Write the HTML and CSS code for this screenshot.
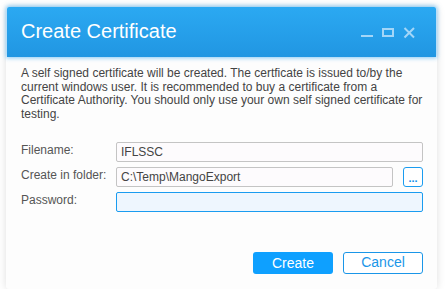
FILE: index.html
```html
<!DOCTYPE html>
<html lang="en">
<head>
    <meta charset="UTF-8">
    <title>Create Certificate</title>
    <link rel="stylesheet" href="styles.css">
</head>
<body>

<div class="dialog">
    <div class="dialog-header">
        <span class="dialog-title">Create Certificate</span>
        <div class="window-buttons">
            <svg width="13" height="12" viewBox="0 0 13 12"><rect x="0" y="8" width="12" height="2" fill="currentColor"/></svg>
            <svg width="13" height="12" viewBox="0 0 13 12"><rect x="1" y="2" width="10" height="7" fill="none" stroke="currentColor" stroke-width="2"/></svg>
            <svg width="13" height="12" viewBox="0 0 13 12"><path d="M1.5 1 L11 10.5 M11 1 L1.5 10.5" stroke="currentColor" stroke-width="2"/></svg>
        </div>
    </div>

    <div class="dialog-body">
        <p class="intro">A self signed certificate will be created. The certficate is issued to/by the current windows user. It is recommended to buy a certificate from a Certificate Authority. You should only use your own self signed certificate for testing.</p>

        <div class="form">
            <label for="filename">Filename:</label>
            <input type="text" id="filename" class="field" value="IFLSSC">

            <label for="folder">Create in folder:</label>
            <div class="folder-row">
                <input type="text" id="folder" class="field" value="C:\Temp\MangoExport">
                <button class="browse-button">...</button>
            </div>

            <label for="password">Password:</label>
            <input type="password" id="password" class="field field-focus">
        </div>

        <div class="actions">
            <button class="btn btn-primary">Create</button>
            <button class="btn btn-outline">Cancel</button>
        </div>
    </div>
</div>

</body>
</html>
```

FILE: styles.css
```css
body {
    margin: 0;
    background: #fff;
    font-family: 'Liberation Sans', Arial, sans-serif;
    padding: 7px 0 0 6px;
}

.dialog {
    width: 431px;
    background: #fdfdfd;
    border-radius: 3px;
    box-shadow: 0 0 8px rgba(0, 0, 0, 0.13);
}

.dialog-header {
    height: 50px;
    margin: 0 1px;
    padding: 0 14px;
    display: flex;
    align-items: center;
    justify-content: space-between;
    background: linear-gradient(#2ba9f2, #2196e2);
    box-shadow: 0 0 4px 1px rgba(40, 160, 240, 0.55);
    border-radius: 2px 2px 0 0;
}

.dialog-title {
    color: #fff;
    font-size: 20px;
    margin-top: -2px;
}

.window-buttons {
    display: flex;
    gap: 8px;
    color: #a3d6f8;
    margin-right: 6px;
    margin-top: 2px;
}

.dialog-body {
    padding: 10px 14px 15px 15px;
}

.intro {
    margin: 0;
    font-size: 12px;
    line-height: 13.5px;
    color: #444;
}

.form {
    display: grid;
    grid-template-columns: 95px 1fr;
    row-gap: 5px;
    margin-top: 21px;
}

.form label {
    font-size: 12px;
    color: #555;
    padding-top: 1px;
}

.field {
    box-sizing: border-box;
    width: 100%;
    height: 20px;
    padding: 0 4px;
    font-family: 'Liberation Sans', Arial, sans-serif;
    font-size: 12px;
    color: #444;
    background: #fdfbfd;
    border: 1px solid #c4c4c4;
    border-radius: 2px;
    outline: none;
}

.field-focus {
    background: #eef6fe;
    border-color: #1a9cf0;
}

.folder-row {
    display: flex;
    gap: 10px;
}

.browse-button {
    flex: none;
    box-sizing: border-box;
    width: 20px;
    height: 20px;
    padding: 2px 0 0;
    background: #fff;
    color: #0e8fe8;
    border: 1px solid #1a9cf0;
    border-radius: 3px;
    font-family: 'Liberation Sans', Arial, sans-serif;
    font-size: 11px;
    font-weight: bold;
    line-height: 11px;
}

.actions {
    display: flex;
    justify-content: flex-end;
    gap: 10px;
    margin-top: 40px;
}

.btn {
    box-sizing: border-box;
    width: 80px;
    height: 22px;
    border-radius: 3px;
    font-family: 'Liberation Sans', Arial, sans-serif;
    font-size: 14px;
    cursor: pointer;
    padding: 0;
}

.btn-primary {
    background: #0ea0ff;
    color: #fff;
    border: none;
}

.btn-outline {
    background: #fff;
    color: #1a96e8;
    border: 1px solid #1a96e8;
    padding-bottom: 2px;
}
```
